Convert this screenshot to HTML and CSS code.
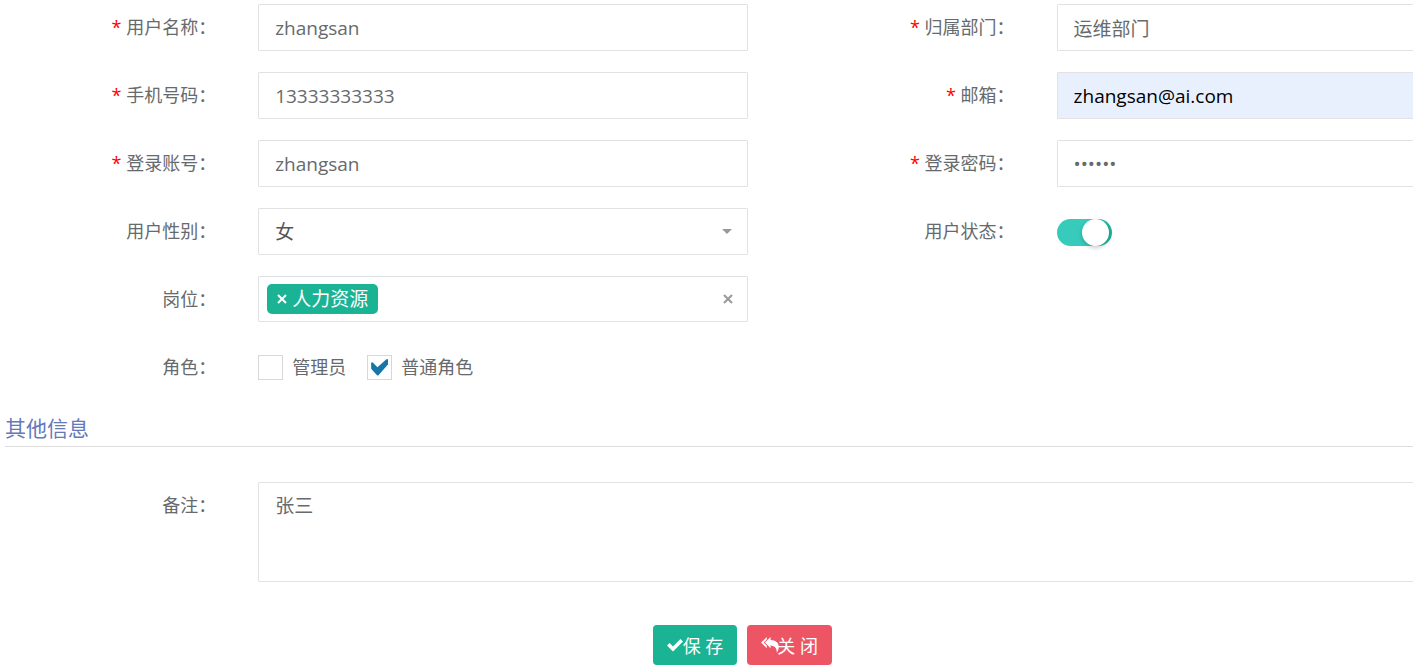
FILE: index.html
```html
<!DOCTYPE html>
<html lang="zh-CN">
<head>
    <meta charset="UTF-8">
    <meta name="viewport" content="width=device-width, initial-scale=1.0">
    <title>修改用户</title>
    <link rel="stylesheet" href="styles.css">
</head>
<body>
    <form class="user-form">
        <div class="row">
            <div class="form-group">
                <label class="control-label is-required" for="userName">用户名称：</label>
                <div class="control"><input class="form-control" id="userName" type="text" value="zhangsan"></div>
            </div>
            <div class="form-group">
                <label class="control-label is-required" for="deptName">归属部门：</label>
                <div class="control"><input class="form-control" id="deptName" type="text" value="运维部门"></div>
            </div>
            <div class="form-group">
                <label class="control-label is-required" for="phone">手机号码：</label>
                <div class="control"><input class="form-control" id="phone" type="text" value="13333333333"></div>
            </div>
            <div class="form-group">
                <label class="control-label is-required" for="email">邮箱：</label>
                <div class="control"><input class="form-control autofilled" id="email" type="text" value="zhangsan@ai.com"></div>
            </div>
            <div class="form-group">
                <label class="control-label is-required" for="loginName">登录账号：</label>
                <div class="control"><input class="form-control" id="loginName" type="text" value="zhangsan"></div>
            </div>
            <div class="form-group">
                <label class="control-label is-required" for="password">登录密码：</label>
                <div class="control"><input class="form-control" id="password" type="password" value="123456"></div>
            </div>
            <div class="form-group">
                <label class="control-label" for="sex">用户性别：</label>
                <div class="control select-wrap">
                    <select class="form-control" id="sex">
                        <option>男</option>
                        <option selected>女</option>
                        <option>未知</option>
                    </select>
                </div>
            </div>
            <div class="form-group">
                <label class="control-label" for="status">用户状态：</label>
                <div class="control"><input class="toggle-switch" id="status" type="checkbox" checked></div>
            </div>
        </div>

        <!-- 岗位 / 角色 -->
        <div class="row">
            <div class="form-group">
                <span class="control-label" id="postLabel">岗位：</span>
                <div class="control">
                    <div class="form-control multi-select" role="group" aria-labelledby="postLabel">
                        <span class="choice">
                            <button class="remove" type="button" aria-label="移除"><svg width="10" height="10" viewBox="0 0 10 10"><path d="M1 1l8 8M9 1L1 9"/></svg></button>人力资源
                        </span>
                        <button class="remove clear" type="button" aria-label="清空"><svg width="10" height="10" viewBox="0 0 10 10"><path d="M1 1l8 8M9 1L1 9"/></svg></button>
                    </div>
                </div>
            </div>
        </div>
        <div class="row">
            <div class="form-group">
                <span class="control-label" id="roleLabel">角色：</span>
                <div class="control check-list" role="group" aria-labelledby="roleLabel">
                    <label class="check-box"><input type="checkbox">管理员</label>
                    <label class="check-box"><input type="checkbox" checked>普通角色</label>
                </div>
            </div>
        </div>

        <h4 class="form-header">其他信息</h4>

        <div class="row">
            <div class="form-group full">
                <label class="control-label" for="remark">备注：</label>
                <div class="control"><textarea class="form-control" id="remark">张三</textarea></div>
            </div>
        </div>
    </form>

    <div class="actions">
        <button class="btn btn-primary" type="button"><svg width="16" height="14" viewBox="0 0 16 14"><path d="M0 7.5L2.5 5 6 8.4 13.4 1 16 3.5 6 13.4z"/></svg>保 存</button>
        <button class="btn btn-danger" type="button"><svg width="18" height="16" viewBox="0 0 18 16"><path d="M5.800 0v2.400L2.800 5.600l3 3.200v2.400L0 5.600zM9.600 0v3c5.200.2 8.200 2.600 8.200 7 0 2.200-.8 4.200-2 5.800.2-4.400-1.600-7-6.200-7.400v2.800L3.900 5.600z"/></svg>关 闭</button>
    </div>
</body>
</html>
```
FILE: styles.css
```css
* {
    box-sizing: border-box;
}
body {
    margin: 0;
    padding: 4px 0 0 5px;
    overflow-x: hidden;
    background: #fff;
    color: #676a6c;
    font-family: "Open Sans", "Noto Sans CJK SC", sans-serif;
    font-size: 18px;
    line-height: 26px;
}
input, select, textarea, button {
    font-family: inherit;
    color: inherit;
}

/* form grid */
.user-form {
    width: 111%;
}
.row {
    display: grid;
    grid-template-columns: 1fr 1fr;
    margin: 0 0 0 -34px;
}
.form-group {
    display: flex;
    align-items: flex-start;
    margin-bottom: 21px;
}
.form-group.full {
    grid-column: 1 / -1;
}
.control-label {
    width: 33.333%;
    padding: 10px 21px 0 0;
    text-align: right;
}
.full .control-label {
    width: 16.667%;
}
.is-required::before {
    content: "* ";
    color: red;
}
.control {
    flex: 1;
    min-height: 47px;
    padding: 0 21px;
}

/* controls */
.form-control {
    display: block;
    width: 100%;
    height: 47px;
    margin: 0;
    padding: 9px 16px;
    border: 1px solid #e0e2e3;
    border-radius: 1px;
    background: #fff;
    font-size: 19px;
    line-height: 28px;
    outline: none;
}
.autofilled {
    background: #e8f0fe;
    color: #000;
}
textarea.form-control {
    height: 100px;
    resize: none;
}
.select-wrap {
    position: relative;
}
.select-wrap select {
    appearance: none;
    color: #555;
}
.select-wrap::after {
    content: "";
    position: absolute;
    top: 21px;
    right: 37px;
    border: 5px solid transparent;
    border-top-color: #999;
    border-bottom: 0;
    pointer-events: none;
}
.multi-select {
    display: flex;
    align-items: center;
    justify-content: space-between;
    height: 46px;
    padding: 0 14px 0 8px;
}
.choice {
    display: flex;
    align-items: center;
    gap: 5px;
    height: 30px;
    padding: 0 10px;
    border-radius: 5px;
    background: #1ab394;
    color: #fff;
}
.remove {
    display: flex;
    padding: 0;
    border: 0;
    background: none;
    cursor: pointer;
}
.remove svg {
    fill: none;
    stroke: currentColor;
    stroke-width: 2;
}
.clear {
    color: #999;
}
.toggle-switch {
    display: block;
    appearance: none;
    width: 55px;
    height: 27px;
    margin: 11px 0 0;
    padding: 0 3px;
    border-radius: 14px;
    background: linear-gradient(90deg, #36cbbb 60%, #1ab394);
}
.toggle-switch::before {
    content: "";
    display: block;
    width: 27px;
    height: 27px;
    margin-left: auto;
    border-radius: 50%;
    background: #fff;
    box-shadow: 0 2px 4px rgba(0, 0, 0, 0.2);
}
.check-list {
    display: flex;
    gap: 21px;
    padding-top: 10px;
}
.check-box {
    display: flex;
    align-items: center;
    gap: 9px;
    height: 26px;
}
.check-box input {
    appearance: none;
    width: 25px;
    height: 25px;
    margin: 0;
    padding: 3px;
    border: 1px solid #d5d7d8;
    background: #fff;
}
.check-box input:checked::before {
    content: "";
    display: block;
    width: 17px;
    height: 17px;
    background: #1675a9;
    clip-path: polygon(0 24%, 10% 24%, 37% 52%, 90% 4%, 100% 4%, 100% 34%, 42% 100%, 36% 100%, 0 60%);
}

.form-header {
    margin: 1px 0 35px;
    padding-bottom: 3px;
    border-bottom: 1px solid #ddd;
    color: #6379bb;
    font-size: 21px;
    font-weight: 400;
    line-height: 30px;
}

/* buttons */
.actions {
    display: flex;
    gap: 10px;
    margin-top: 22px;
    padding-left: 46%;
}
.btn {
    display: flex;
    align-items: center;
    height: 40px;
    padding: 0 14px;
    border: 0;
    border-radius: 4px;
    color: #fff;
    font-size: 18px;
    cursor: pointer;
}
.btn svg {
    fill: currentColor;
}
.btn-primary {
    background: #1ab394;
}
.btn-danger {
    background: #ed5565;
}
.btn-danger svg {
    margin-right: -2px;
}
```
